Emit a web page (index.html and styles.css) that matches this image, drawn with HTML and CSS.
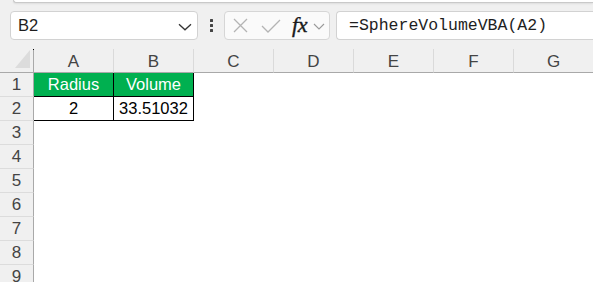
FILE: index.html
```html
<!DOCTYPE html>
<html>
<head>
<meta charset="utf-8">
<link rel="stylesheet" href="styles.css">
</head>
<body>
<div class="app">
  <div class="topstrip"><div class="ribbon-edge"></div></div>
  <div class="toolbar">
    <div class="namebox">
      <span class="name">B2</span>
      <svg class="chev" width="14" height="8" viewBox="0 0 14 8"><path d="M1 1.2 L7 6.8 L13 1.2" fill="none" stroke="#333" stroke-width="1.3"/></svg>
    </div>
    <div class="dots"><span></span><span></span><span></span></div>
    <div class="fxbox">
      <svg class="ico-x" width="15" height="15" viewBox="0 0 15 15"><path d="M1 1 L14 14 M14 1 L1 14" stroke="#b4b4b4" stroke-width="1.3" fill="none"/></svg>
      <svg class="ico-check" width="20" height="14" viewBox="0 0 20 14"><path d="M1 7 L7 13 L19 1" stroke="#b4b4b4" stroke-width="1.3" fill="none"/></svg>
      <span class="fx">fx</span>
      <svg class="chev-sm" width="12" height="7" viewBox="0 0 12 7"><path d="M1 1 L6 6 L11 1" fill="none" stroke="#9a9a9a" stroke-width="1.1"/></svg>
    </div>
    <div class="formula">=SphereVolumeVBA(A2)</div>
  </div>
  <div class="sheet">
    <div class="corner"><div class="tri"></div></div>
    <div class="colh">A</div><div class="colh">B</div><div class="colh">C</div><div class="colh">D</div><div class="colh">E</div><div class="colh">F</div><div class="colh">G</div>

    <div class="rowh">1</div>
    <div class="cell hdr">Radius</div><div class="cell hdr">Volume</div>
    <div class="cell"></div><div class="cell"></div><div class="cell"></div><div class="cell"></div><div class="cell"></div>

    <div class="rowh">2</div>
    <div class="cell data">2</div><div class="cell data">33.51032</div>
    <div class="cell"></div><div class="cell"></div><div class="cell"></div><div class="cell"></div><div class="cell"></div>

    <div class="rowh">3</div><div class="cell span"></div>
    <div class="rowh">4</div><div class="cell span"></div>
    <div class="rowh">5</div><div class="cell span"></div>
    <div class="rowh">6</div><div class="cell span"></div>
    <div class="rowh">7</div><div class="cell span"></div>
    <div class="rowh">8</div><div class="cell span"></div>
    <div class="rowh">9</div><div class="cell span"></div>
  </div>
</div>
</body>
</html>
```

FILE: styles.css
```css
* { box-sizing: border-box; }
html, body {
  margin: 0;
  padding: 0;
  background: #f0f0f0;
  overflow: hidden;
}
body {
  width: 593px;
  height: 282px;
  font-family: "Liberation Sans", Arial, sans-serif;
}
.app {
  display: flex;
  flex-direction: column;
}
.topstrip {
  height: 9px;
  padding-left: 13px;
}
.ribbon-edge {
  height: 3px;
  background: #ffffff;
  border-bottom: 1px solid #c9c9c9;
  border-left: 1px solid #c9c9c9;
  border-bottom-left-radius: 5px;
  box-shadow: 0 1px 2px rgba(0,0,0,0.08);
}
.toolbar {
  display: flex;
  align-items: center;
  height: 31px;
  padding-left: 10px;
  padding-top: 2px;
}
.namebox {
  width: 188px;
  height: 29px;
  background: #fff;
  border: 1px solid #d2d2d2;
  border-radius: 4px;
  display: flex;
  align-items: center;
  justify-content: space-between;
  padding: 0 5px 0 7px;
}
.name {
  font-size: 16.5px;
  color: #1e1e1e;
}
.chev { margin-top: 2px; }
.dots {
  width: 26px;
  display: flex;
  flex-direction: column;
  align-items: center;
  gap: 2px;
}
.dots span {
  width: 3px;
  height: 3px;
  background: #444;
  border-radius: 0.5px;
}
.fxbox {
  width: 106px;
  height: 29px;
  background: #fafafa;
  border: 1px solid #d6d6d6;
  border-radius: 4px;
  display: flex;
  align-items: center;
  padding-left: 8px;
}
.ico-x { margin-right: 13px; }
.ico-check { margin-right: 11px; }
.fx {
  font-family: "Liberation Serif", "Times New Roman", serif;
  font-style: italic;
  font-size: 22px;
  color: #1a1a1a;
  margin-right: 6px;
  letter-spacing: -0.3px;
  line-height: 1;
  margin-top: -2px;
  -webkit-text-stroke: 0.4px #1a1a1a;
}
.chev-sm { margin-top: 2px; }
.formula {
  margin-left: 6px;
  flex: 1;
  height: 29px;
  background: #fff;
  border: 1px solid #d2d2d2;
  border-right: none;
  border-radius: 4px 0 0 4px;
  display: flex;
  align-items: center;
  padding-left: 12px;
  font-family: "Liberation Mono", "DejaVu Sans Mono", monospace;
  font-size: 16.5px;
  color: #1e1e1e;
}
.sheet {
  margin-top: 9px;
  display: grid;
  grid-template-columns: 34px repeat(7, 80px);
  grid-template-rows: 24px repeat(9, 24px);
  background: #fff;
}
.corner {
  background: #f0f0f0;
  border-right: 1px solid #a9a9a9;
  border-bottom: 1px solid #a9a9a9;
  display: flex;
  justify-content: flex-end;
  align-items: flex-end;
  padding: 0 3px 4px 0;
  position: relative;
}
.corner::after {
  content: "";
  position: absolute;
  right: -1px;
  top: 0;
  width: 1px;
  height: 1px;
  background: #000;
}
.tri {
  width: 15px;
  height: 18px;
  background: #dcdcdc;
  clip-path: polygon(100% 0, 100% 100%, 0 100%);
}
.colh {
  background: #f0f0f0;
  border-bottom: 1px solid #a9a9a9;
  border-right: 1px solid #dadada;
  display: flex;
  align-items: center;
  justify-content: center;
  font-size: 17px;
  color: #444;
  padding-top: 2px;
}
.rowh {
  background: #f0f0f0;
  border-right: 1px solid #a9a9a9;
  border-bottom: 1px solid #dcdcdc;
  display: flex;
  align-items: center;
  justify-content: center;
  font-size: 17px;
  color: #444;
}
.cell {
  background: #fff;
  display: flex;
  align-items: center;
  justify-content: center;
  font-size: 16.5px;
  color: #000;
}
.cell.span { grid-column: 2 / -1; }
.cell.hdr {
  background: #00b050;
  color: #fff;
  border-right: 1px solid #000;
  border-bottom: 1px solid #000;
}
.cell.data {
  border-right: 1px solid #000;
  border-bottom: 1px solid #000;
}
```
